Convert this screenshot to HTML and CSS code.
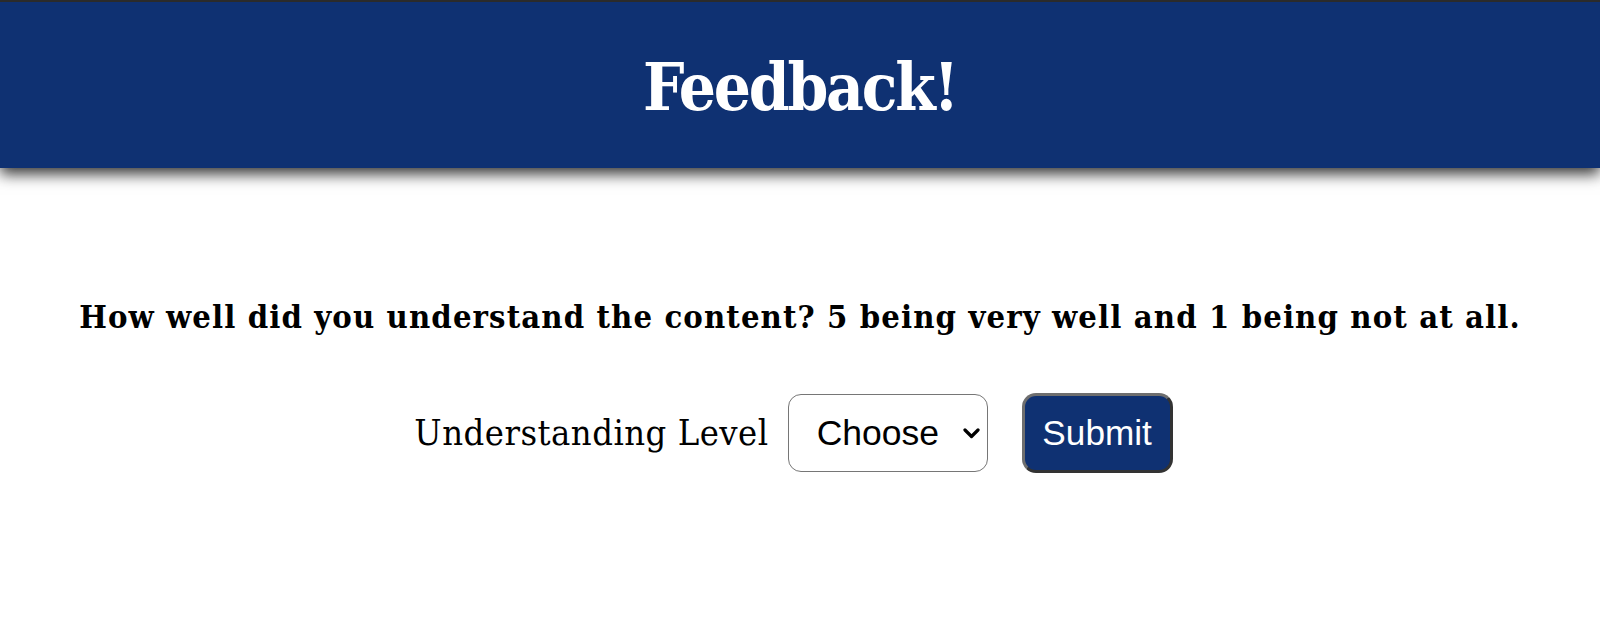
FILE: index.html
```html
<!DOCTYPE html>
<html lang="en">
<head>
<meta charset="utf-8">
<title>Feedback</title>
<link rel="stylesheet" href="styles.css">
</head>
<body>
<header class="site-header">
  <h1 class="title">Feedback!</h1>
</header>
<main class="content">
  <p class="question">How well did you understand the content? 5 being very well and 1 being not at all.</p>
  <form class="feedback-form">
    <label class="level-label" for="level">Understanding Level</label>
    <span class="select-wrap">
      <select id="level" class="level-select">
        <option>Choose</option>
        <option>1</option>
        <option>2</option>
        <option>3</option>
        <option>4</option>
        <option>5</option>
      </select>
      <svg class="chevron" width="17" height="11" viewBox="0 0 17 11" aria-hidden="true"><path d="M2 2 L8.5 8.5 L15 2" fill="none" stroke="#000" stroke-width="3.2" stroke-linecap="round" stroke-linejoin="round"/></svg>
    </span>
    <button type="button" class="submit-btn">Submit</button>
  </form>
</main>
</body>
</html>
```

FILE: styles.css
```css
html, body {
  margin: 0;
  padding: 0;
  background: #ffffff;
}

body {
  font-family: "DejaVu Serif Condensed", "DejaVu Serif", serif;
  color: #000;
}

.site-header {
  border-top: 2px solid #2b2b2b;
  background: #0f3172;
  height: 166px;
  display: flex;
  align-items: center;
  justify-content: center;
  box-shadow: 0 6px 14px rgba(0, 0, 0, 0.8);
}

.title {
  margin: 0;
  color: #ffffff;
  font-size: 65px;
  line-height: 80px;
  letter-spacing: -2.2px;
  font-weight: bold;
  transform: translateY(2px);
}

.content {
  display: flex;
  flex-direction: column;
  align-items: center;
  padding-top: 129px;
}

.question {
  margin: 0;
  font-size: 32.5px;
  line-height: 40px;
  letter-spacing: 1.1px;
  font-weight: bold;
  text-align: center;
}

.feedback-form {
  margin-top: 56px;
  display: flex;
  align-items: center;
  padding-right: 13px;
}

.level-label {
  font-size: 36px;
  line-height: 44px;
  letter-spacing: 0.5px;
  margin-right: 19px;
}

.select-wrap {
  position: relative;
  display: inline-block;
  width: 200px;
  height: 78px;
}

.level-select {
  appearance: none;
  -webkit-appearance: none;
  box-sizing: border-box;
  width: 200px;
  height: 78px;
  margin: 0;
  padding: 0 0 0 28px;
  border: 1px solid #767676;
  border-radius: 13px;
  background: #ffffff;
  font-family: "Liberation Sans", Arial, sans-serif;
  font-size: 35.5px;
  color: #000;
}

.chevron {
  position: absolute;
  left: 175px;
  top: 34px;
  pointer-events: none;
}

.submit-btn {
  box-sizing: border-box;
  width: 151px;
  height: 80px;
  margin-left: 34px;
  padding: 0;
  border: 3px solid;
  border-color: #6e6e6e #333333 #333333 #6e6e6e;
  border-radius: 14px;
  background: #0f3172;
  color: #ffffff;
  font-family: "Liberation Sans", Arial, sans-serif;
  font-size: 35.2px;
  line-height: 1;
}
```
